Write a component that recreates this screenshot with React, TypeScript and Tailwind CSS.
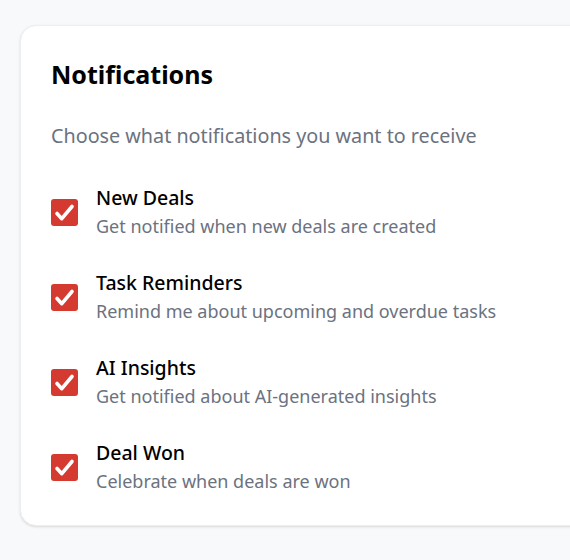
import React, { useState } from "react";

const items = [
  { id: "deals", title: "New Deals", desc: "Get notified when new deals are created" },
  { id: "tasks", title: "Task Reminders", desc: "Remind me about upcoming and overdue tasks" },
  { id: "ai", title: "AI Insights", desc: "Get notified about AI-generated insights" },
  { id: "won", title: "Deal Won", desc: "Celebrate when deals are won" },
];

export default function App() {
  const [checked, setChecked] = useState<Record<string, boolean>>({
    deals: true,
    tasks: true,
    ai: true,
    won: true,
  });

  return (
    <div
      className="min-h-[560px] w-[570px] overflow-hidden bg-[#f8f9fb] pt-[25px] pl-[20px]"
      style={{ fontFamily: '"Noto Sans", "Open Sans", sans-serif' }}
    >
      <div className="w-[600px] rounded-2xl border border-[#eceef1] bg-white px-[30px] pt-[32px] pb-[30px] shadow-sm">
        <h2 className="text-[25px] font-bold leading-8 text-black">Notifications</h2>
        <p className="mt-8 text-[19.75px] leading-7 text-[#6b7280]">
          Choose what notifications you want to receive
        </p>
        <div className="mt-[34px] flex flex-col gap-[29px]">
          {items.map((it) => (
            <label key={it.id} className="flex cursor-pointer items-center gap-[18px]">
              <button
                type="button"
                onClick={() => setChecked((c) => ({ ...c, [it.id]: !c[it.id] }))}
                className={`flex h-[27px] w-[27px] shrink-0 items-center justify-center rounded-[3px] ${
                  checked[it.id] ? "bg-[#d43a2f]" : "border border-gray-400 bg-white"
                }`}
              >
                {checked[it.id] && (
                  <svg viewBox="0 0 27 27" className="h-[27px] w-[27px]" fill="none">
                    <path
                      d="M6 14.5l4.8 5.2L21 7.5"
                      stroke="white"
                      strokeWidth="3.6"
                      strokeLinecap="round"
                      strokeLinejoin="round"
                    />
                  </svg>
                )}
              </button>
              <div className="flex flex-col">
                <span className="text-[19.5px] font-medium leading-7 text-black">{it.title}</span>
                <span className="text-[18px] leading-7 text-[#6b7280]">{it.desc}</span>
              </div>
            </label>
          ))}
        </div>
      </div>
    </div>
  );
}
